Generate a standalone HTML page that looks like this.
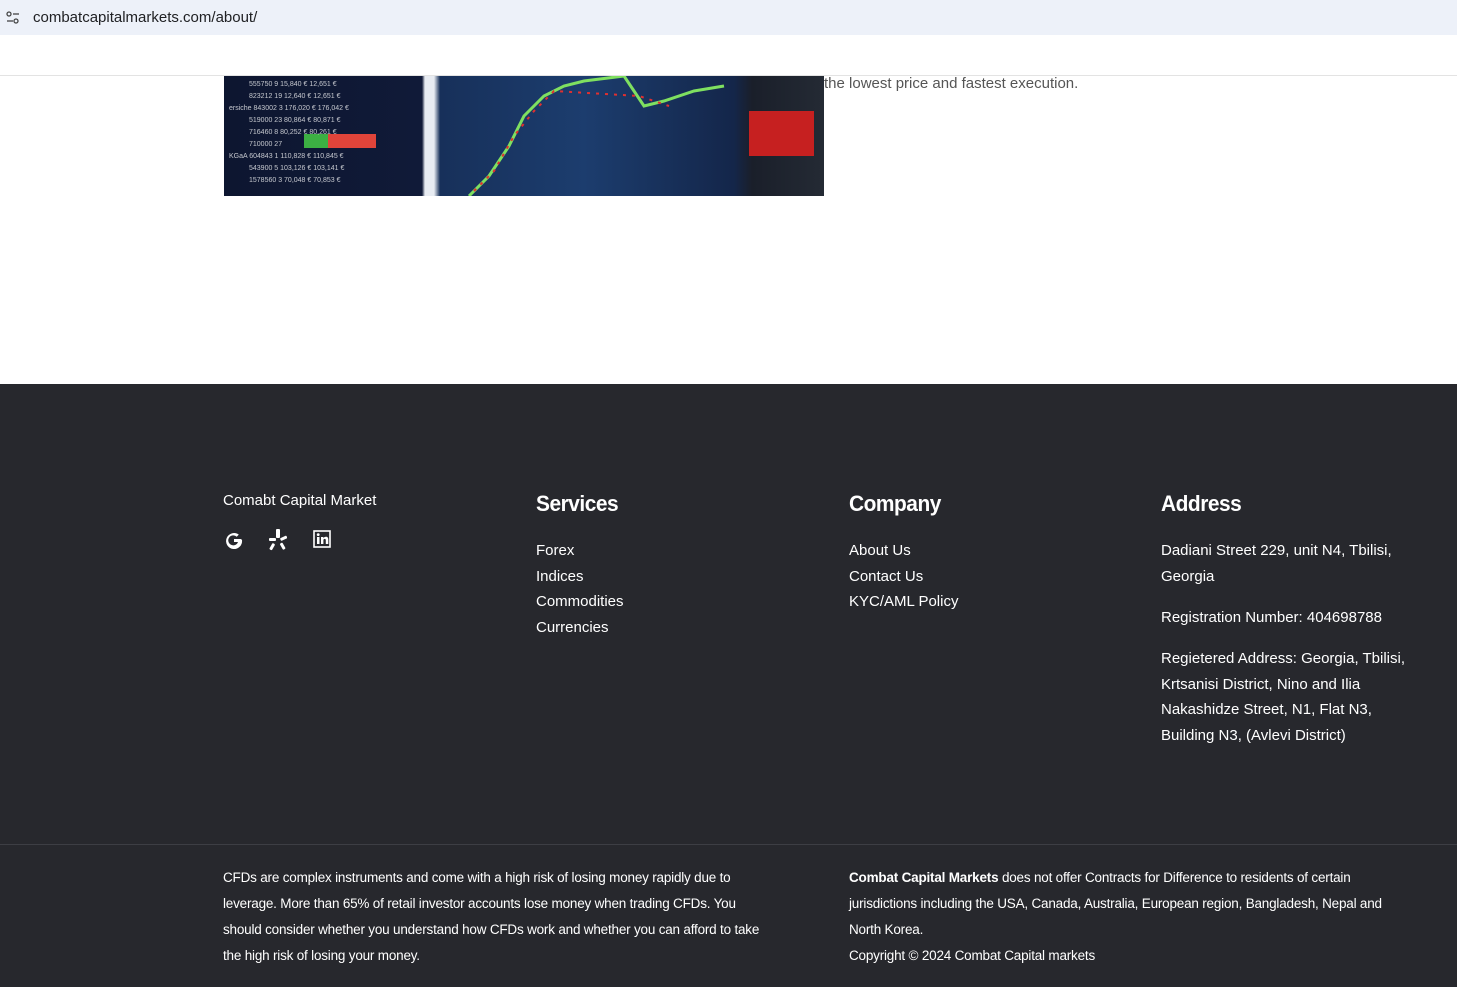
<!DOCTYPE html>
<html><head><meta charset="utf-8"><style>
body{margin:0;width:1457px;height:987px;overflow:hidden;font-family:"Liberation Sans",sans-serif;background:#fff;position:relative}
.bar{position:absolute;left:0;top:0;width:1457px;height:35px;background:#edf1f9}
.url{position:absolute;left:33px;top:9px;font-size:15px;color:#202124}
.hr{position:absolute;left:0;top:75px;width:1457px;height:1px;background:#e3e3e3}
.img{position:absolute;left:224px;top:76px;width:600px;height:120px;background:linear-gradient(90deg,#0d1630 0,#101a38 33%,#e8ecf2 33.5%,#e8ecf2 35%,#17305a 36%,#1c3d6e 60%,#14264a 85%,#1a1f2a 88%,#242a34 100%);overflow:hidden}
.t{position:absolute;left:824px;top:75px;font-size:15px;color:#555}
.ft{position:absolute;left:0;top:384px;width:1457px;height:603px;background:#27282d;color:#fff}
.ft div{position:absolute}
h3{margin:0;font-size:22px;font-weight:bold;position:absolute;letter-spacing:-0.5px;transform:scaleX(.95);transform-origin:left}
.l{font-size:15px;line-height:25.5px;white-space:nowrap}
.s{font-size:13.5px;line-height:26px;white-space:nowrap;letter-spacing:-0.2px}
</style></head><body>
<div class="bar"></div>
<svg style="position:absolute;left:5px;top:10px" width="16" height="16" viewBox="0 0 16 16" fill="none" stroke="#444" stroke-width="1.3"><circle cx="4" cy="4" r="2"/><line x1="8" y1="4" x2="14" y2="4"/><circle cx="11" cy="11" r="2"/><line x1="2" y1="11" x2="8" y2="11"/></svg>
<div class="url">combatcapitalmarkets.com/about/</div>
<div class="hr"></div>
<div class="img">
<div style="position:absolute;left:80px;top:58px;width:24px;height:14px;background:#3cb043"></div>
<div style="position:absolute;left:104px;top:58px;width:48px;height:14px;background:#e0443a"></div>
<svg style="position:absolute;left:0;top:0" width="600" height="120">
<g fill="#fff" opacity=".75" font-size="7" font-family="Liberation Sans">
<text x="25" y="10">555750  9    15,840 €   12,651 €</text><text x="25" y="22">823212 19   12,640 €   12,651 €</text><text x="5" y="34">ersiche 843002 3   176,020 € 176,042 €</text><text x="25" y="46">519000 23   80,864 €  80,871 €</text><text x="25" y="58">716460  8   80,252 €  80,261 €</text><text x="25" y="70">710000 27</text><text x="5" y="82">KGaA 604843 1  110,828 € 110,845 €</text><text x="25" y="94">543900  5   103,126 € 103,141 €</text><text x="25" y="106">1578560  3   70,048 €  70,853 €</text></g>
<polyline points="245,120 265,100 285,70 300,40 320,20 340,10 360,5 400,0 420,30 440,25 470,15 500,10" stroke="#7fe060" stroke-width="3" fill="none"/>
<polyline points="250,115 270,95 290,60 310,35 330,15 415,20 445,30" stroke="#e03030" stroke-width="2" fill="none" stroke-dasharray="3 6"/>
<rect x="525" y="35" width="65" height="45" fill="#c62020"/></svg>
</div>
<div class="t">the lowest price and fastest execution.</div>
<div class="ft">
<div style="left:223px;top:108px;font-size:15px">Comabt Capital Market</div>
<svg style="position:absolute;left:224px;top:146px" width="20" height="20" viewBox="0 0 20 20"><path d="M17 9H10v3h4a5 5 0 1 1-1.3-5.3l2.1-2.1A8 8 0 1 0 18 10z" fill="#fff"/></svg>
<svg style="position:absolute;left:269px;top:145px" width="18" height="22" viewBox="0 0 18 22" fill="#fff"><rect x="7" y="0" width="4" height="9" rx="1"/><rect x="0" y="9" width="7" height="3" rx="1"/><rect x="11" y="8" width="7" height="3" rx="1" transform="rotate(-25 14 9)"/><rect x="2" y="14" width="3" height="7" rx="1" transform="rotate(30 3 17)"/><rect x="12" y="14" width="3" height="7" rx="1" transform="rotate(-30 13 17)"/></svg>
<svg style="position:absolute;left:313px;top:146px" width="18" height="18" viewBox="0 0 18 18"><rect x="1" y="1" width="16" height="16" fill="none" stroke="#fff" stroke-width="1.6"/><rect x="4" y="7" width="2.5" height="7" fill="#fff"/><circle cx="5.2" cy="4.6" r="1.4" fill="#fff"/><path d="M8 7h2.4v1.2c.6-1 1.6-1.4 2.6-1.4 1.8 0 2.3 1.2 2.3 3V14h-2.5v-3.6c0-.9-.3-1.5-1.1-1.5s-1.3.6-1.3 1.5V14H8z" fill="#fff"/></svg>
<h3 style="left:536px;top:107px">Services</h3>
<h3 style="left:849px;top:107px">Company</h3>
<h3 style="left:1161px;top:107px">Address</h3>
<div class="l" style="left:536px;top:154px">Forex<br>Indices<br>Commodities<br>Currencies</div>
<div class="l" style="left:849px;top:154px">About Us<br>Contact Us<br>KYC/AML Policy</div>
<div class="l" style="left:1161px;top:154px">Dadiani Street 229, unit N4, Tbilisi,<br>Georgia</div>
<div class="l" style="left:1161px;top:221px">Registration Number: 404698788</div>
<div class="l" style="left:1161px;top:262px">Regietered Address: Georgia, Tbilisi,<br>Krtsanisi District, Nino and Ilia<br>Nakashidze Street, N1, Flat N3,<br>Building N3, (Avlevi District)</div>
<div style="left:0;top:460px;width:1457px;height:1px;background:#3d3e44"></div>
<div class="s" style="left:223px;top:481px">CFDs are complex instruments and come with a high risk of losing money rapidly due to<br>leverage. More than 65% of retail investor accounts lose money when trading CFDs. You<br>should consider whether you understand how CFDs work and whether you can afford to take<br>the high risk of losing your money.</div>
<div class="s" style="left:849px;top:481px"><b>Combat Capital Markets</b> does not offer Contracts for Difference to residents of certain<br>jurisdictions including the USA, Canada, Australia, European region, Bangladesh, Nepal and<br>North Korea.<br>Copyright © 2024 Combat Capital markets</div>
</div>
</body></html>
